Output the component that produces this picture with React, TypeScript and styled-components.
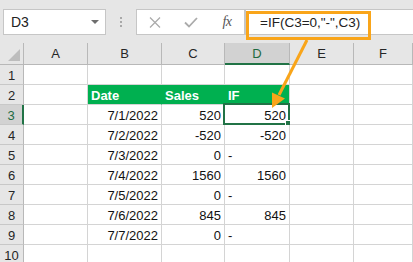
import React from 'react';
import styled, { createGlobalStyle } from 'styled-components';

const GlobalStyle = createGlobalStyle`
  html, body { margin: 0; padding: 0; background: #fff; }
  body { font-family: "Liberation Sans", Arial, sans-serif; overflow: hidden; }
`;

const Page = styled.div`
  position: relative;
  width: 413px;
  height: 262px;
  overflow: hidden;
  background: #fff;
`;

const FormulaBar = styled.div`
  height: 43px;
  box-sizing: border-box;
  background: #e6e6e6;
  display: flex;
  align-items: flex-start;
  padding: 9px 0 0 3px;
`;

const NameBox = styled.div`
  width: 103px;
  height: 26px;
  box-sizing: border-box;
  background: #fff;
  border: 1px solid #c6c6c6;
  display: flex;
  align-items: center;
  justify-content: space-between;
  padding: 0 6px 0 7px;
  font-size: 14px;
  color: #222;
`;

const DropArrow = styled.span`
  width: 0;
  height: 0;
  border-left: 4px solid transparent;
  border-right: 4px solid transparent;
  border-top: 4px solid #6e6e6e;
`;

const Grip = styled.div`
  width: 30px;
  height: 26px;
  display: flex;
  flex-direction: column;
  align-items: center;
  justify-content: center;
  gap: 2px;
`;

const GripDot = styled.span`
  width: 2px;
  height: 2px;
  background: #a8a8a8;
`;

const FxBox = styled.div`
  width: 109px;
  height: 26px;
  box-sizing: border-box;
  background: #fff;
  border: 1px solid #c6c6c6;
  display: grid;
  grid-template-columns: 36px 36px 36px;
  align-items: center;
  justify-items: center;
`;

const FxLabel = styled.span`
  font-family: "Liberation Serif", "Times New Roman", serif;
  font-style: italic;
  font-size: 14px;
  color: #555;
  letter-spacing: -0.5px;
`;

const FormulaInput = styled.div`
  flex: 1;
  height: 26px;
  box-sizing: border-box;
  background: #fff;
  border: 1px solid #c6c6c6;
  border-right: none;
  padding-left: 14px;
  display: flex;
  align-items: center;
  font-size: 13.5px;
  color: #222;
`;

const Sheet = styled.div`
  display: grid;
  grid-template-columns: 24px 64px 74px 63px 65px 64px 1fr;
  grid-template-rows: 22px repeat(10, 20px);
`;

const Corner = styled.div`
  position: relative;
  background: #e6e6e6;
  border-right: 1px solid #b8b8b8;
  border-bottom: 1px solid #b8b8b8;
  box-sizing: border-box;
  &::after {
    content: '';
    position: absolute;
    right: 3px;
    bottom: 3px;
    width: 0;
    height: 0;
    border-left: 12px solid transparent;
    border-bottom: 12px solid #bdbdbd;
  }
`;

const ColHead = styled.div<{ $active?: boolean }>`
  box-sizing: border-box;
  background: ${(p) => (p.$active ? '#d2d2d2' : '#e6e6e6')};
  border-right: 1px solid #b8b8b8;
  border-bottom: ${(p) => (p.$active ? '2px solid #217346' : '1px solid #b8b8b8')};
  text-align: center;
  line-height: 21px;
  font-size: 13px;
  color: ${(p) => (p.$active ? '#1e6b41' : '#262626')};
`;

const RowHead = styled.div<{ $active?: boolean }>`
  box-sizing: border-box;
  background: ${(p) => (p.$active ? '#d2d2d2' : '#e6e6e6')};
  border-right: ${(p) => (p.$active ? '2px solid #217346' : '1px solid #b8b8b8')};
  border-bottom: 1px solid #c8c8c8;
  display: flex;
  align-items: flex-end;
  justify-content: center;
  line-height: 17px;
  font-size: 13px;
  color: ${(p) => (p.$active ? '#1e6b41' : '#262626')};
`;

const Cell = styled.div<{ $align?: 'left' | 'right'; $head?: boolean; $selected?: boolean; $lastHead?: boolean }>`
  position: relative;
  box-sizing: border-box;
  border-right: 1px solid ${(p) => (p.$head && !p.$lastHead ? '#00b050' : '#d4d4d4')};
  border-bottom: 1px solid #d4d4d4;
  background: ${(p) => (p.$head ? '#00b050' : '#fff')};
  color: ${(p) => (p.$head ? '#fff' : '#111')};
  font-weight: ${(p) => (p.$head ? 700 : 400)};
  display: flex;
  align-items: flex-end;
  justify-content: ${(p) => (p.$align === 'right' ? 'flex-end' : 'flex-start')};
  padding: 0 3px;
  line-height: 17px;
  font-size: 13px;
  white-space: nowrap;
  ${(p) =>
    p.$selected
      ? `
    &::before {
      content: '';
      position: absolute;
      left: -2px;
      top: -2px;
      right: -1px;
      bottom: -1px;
      border: 2px solid #217346;
    }
    &::after {
      content: '';
      position: absolute;
      right: -3px;
      bottom: -3px;
      width: 5px;
      height: 5px;
      background: #217346;
      border: 1px solid #fff;
    }
  `
      : ''}
`;

const Overlay = styled.svg`
  position: absolute;
  left: 0;
  top: 0;
  pointer-events: none;
`;

const COLS = ['A', 'B', 'C', 'D', 'E', 'F'];

type Row = { b?: string; c?: string; d?: string; dLeft?: boolean };
const ROWS: Row[] = [
  {},
  {},
  { b: '7/1/2022', c: '520', d: '520' },
  { b: '7/2/2022', c: '-520', d: '-520' },
  { b: '7/3/2022', c: '0', d: '-', dLeft: true },
  { b: '7/4/2022', c: '1560', d: '1560' },
  { b: '7/5/2022', c: '0', d: '-', dLeft: true },
  { b: '7/6/2022', c: '845', d: '845' },
  { b: '7/7/2022', c: '0', d: '-', dLeft: true },
  {},
];

export default function App() {
  return (
    <Page>
      <GlobalStyle />
      <FormulaBar>
        <NameBox>
          <span>D3</span>
          <DropArrow />
        </NameBox>
        <Grip>
          <GripDot />
          <GripDot />
          <GripDot />
        </Grip>
        <FxBox>
          <svg width="12" height="11" viewBox="0 0 12 11">
            <path d="M1 0.5 L11 10.5 M11 0.5 L1 10.5" stroke="#ababab" strokeWidth="1.3" fill="none" />
          </svg>
          <svg width="14" height="11" viewBox="0 0 14 11">
            <path d="M1 5.5 L5 9.5 L13 1" stroke="#ababab" strokeWidth="1.8" fill="none" />
          </svg>
          <FxLabel>fx</FxLabel>
        </FxBox>
        <FormulaInput>=IF(C3=0,"-",C3)</FormulaInput>
      </FormulaBar>
      <Sheet>
        <Corner />
        {COLS.map((c) => (
          <ColHead key={c} $active={c === 'D'}>
            {c}
          </ColHead>
        ))}
        {ROWS.map((r, i) => {
          const n = i + 1;
          if (n === 2) {
            return (
              <React.Fragment key={n}>
                <RowHead>{n}</RowHead>
                <Cell />
                <Cell $head>Date</Cell>
                <Cell $head>Sales</Cell>
                <Cell $head $lastHead>IF</Cell>
                <Cell />
                <Cell />
              </React.Fragment>
            );
          }
          return (
            <React.Fragment key={n}>
              <RowHead $active={n === 3}>{n}</RowHead>
              <Cell />
              <Cell $align="right">{r.b}</Cell>
              <Cell $align="right">{r.c}</Cell>
              <Cell $align={r.dLeft ? 'left' : 'right'} $selected={n === 3}>
                {r.d}
              </Cell>
              <Cell />
              <Cell />
            </React.Fragment>
          );
        })}
      </Sheet>
      <Overlay width="413" height="262" viewBox="0 0 413 262">
        <rect x="247.5" y="12.5" width="122" height="26" fill="none" stroke="#f9a51a" strokeWidth="3" />
        <line x1="307" y1="40" x2="279" y2="95" stroke="#f9a51a" strokeWidth="3" />
        <polygon points="272,108 285,98.6 272,92.4" fill="#f9a51a" />
      </Overlay>
    </Page>
  );
}
